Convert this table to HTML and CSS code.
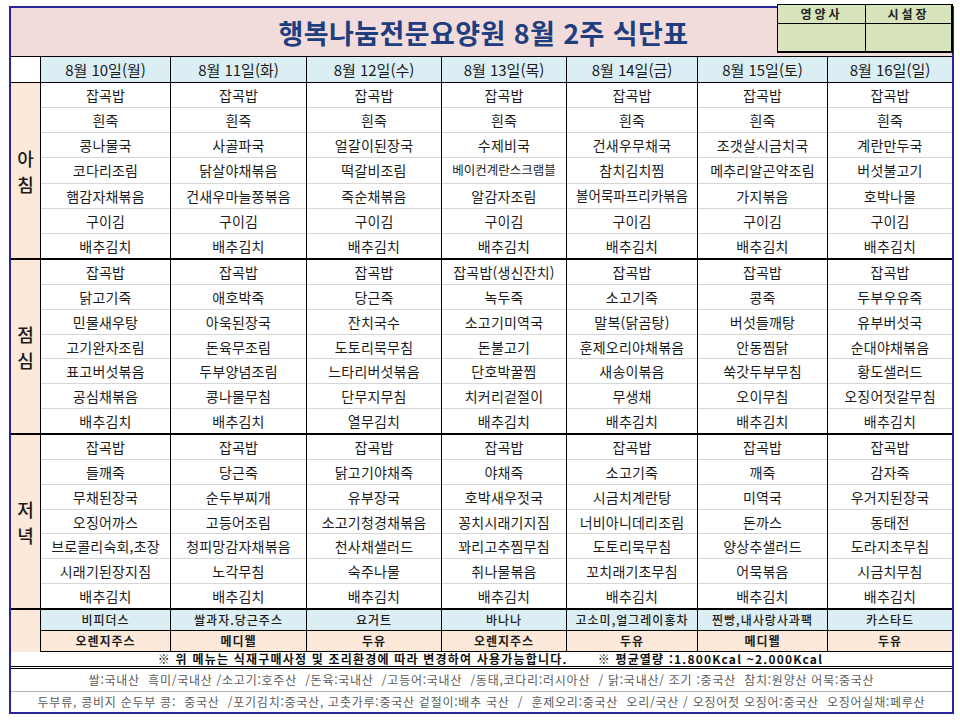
FILE: index.html
```html
<!DOCTYPE html>
<html lang="ko">
<head>
<meta charset="utf-8">
<title>행복나눔전문요양원 8월 2주 식단표</title>
<link rel="stylesheet" href="styles.css">
</head>
<body>
<div class="sheet">
  <header class="title-bar">
    <h1 class="title">행복나눔전문요양원 8월 2주 식단표</h1>
    <div class="sign">
      <div class="sign-head">영양사</div>
      <div class="sign-head sep">시설장</div>
      <div class="sign-body"></div>
      <div class="sign-body sep"></div>
    </div>
  </header>

  <div class="cols head">
    <div class="blank"></div>
    <div class="date">8월 10일(월)</div>
    <div class="date">8월 11일(화)</div>
    <div class="date">8월 12일(수)</div>
    <div class="date">8월 13일(목)</div>
    <div class="date">8월 14일(금)</div>
    <div class="date">8월 15일(토)</div>
    <div class="date">8월 16일(일)</div>
  </div>

  <section class="cols meal">
    <div class="label"><span>아</span><span>침</span></div>
    <div class="day"><div class="dish">잡곡밥</div><div class="dish">흰죽</div><div class="dish">콩나물국</div><div class="dish">코다리조림</div><div class="dish">햄감자채볶음</div><div class="dish">구이김</div><div class="dish">배추김치</div></div>
    <div class="day"><div class="dish">잡곡밥</div><div class="dish">흰죽</div><div class="dish">사골파국</div><div class="dish">닭살야채볶음</div><div class="dish">건새우마늘쫑볶음</div><div class="dish">구이김</div><div class="dish">배추김치</div></div>
    <div class="day"><div class="dish">잡곡밥</div><div class="dish">흰죽</div><div class="dish">얼갈이된장국</div><div class="dish">떡갈비조림</div><div class="dish">죽순채볶음</div><div class="dish">구이김</div><div class="dish">배추김치</div></div>
    <div class="day"><div class="dish">잡곡밥</div><div class="dish">흰죽</div><div class="dish">수제비국</div><div class="dish tight">베이컨계란스크램블</div><div class="dish">알감자조림</div><div class="dish">구이김</div><div class="dish">배추김치</div></div>
    <div class="day"><div class="dish">잡곡밥</div><div class="dish">흰죽</div><div class="dish">건새우무채국</div><div class="dish">참치김치찜</div><div class="dish snug">볼어묵파프리카볶음</div><div class="dish">구이김</div><div class="dish">배추김치</div></div>
    <div class="day"><div class="dish">잡곡밥</div><div class="dish">흰죽</div><div class="dish">조갯살시금치국</div><div class="dish">메추리알곤약조림</div><div class="dish">가지볶음</div><div class="dish">구이김</div><div class="dish">배추김치</div></div>
    <div class="day"><div class="dish">잡곡밥</div><div class="dish">흰죽</div><div class="dish">계란만두국</div><div class="dish">버섯불고기</div><div class="dish">호박나물</div><div class="dish">구이김</div><div class="dish">배추김치</div></div>
  </section>

  <section class="cols meal">
    <div class="label"><span>점</span><span>심</span></div>
    <div class="day"><div class="dish">잡곡밥</div><div class="dish">닭고기죽</div><div class="dish">민물새우탕</div><div class="dish">고기완자조림</div><div class="dish">표고버섯볶음</div><div class="dish">공심채볶음</div><div class="dish">배추김치</div></div>
    <div class="day"><div class="dish">잡곡밥</div><div class="dish">애호박죽</div><div class="dish">아욱된장국</div><div class="dish">돈육무조림</div><div class="dish">두부양념조림</div><div class="dish">콩나물무침</div><div class="dish">배추김치</div></div>
    <div class="day"><div class="dish">잡곡밥</div><div class="dish">당근죽</div><div class="dish">잔치국수</div><div class="dish">도토리묵무침</div><div class="dish">느타리버섯볶음</div><div class="dish">단무지무침</div><div class="dish">열무김치</div></div>
    <div class="day"><div class="dish">잡곡밥(생신잔치)</div><div class="dish">녹두죽</div><div class="dish">소고기미역국</div><div class="dish">돈불고기</div><div class="dish">단호박꿀찜</div><div class="dish">치커리겉절이</div><div class="dish">배추김치</div></div>
    <div class="day"><div class="dish">잡곡밥</div><div class="dish">소고기죽</div><div class="dish">말복(닭곰탕)</div><div class="dish">훈제오리야채볶음</div><div class="dish">새송이볶음</div><div class="dish">무생채</div><div class="dish">배추김치</div></div>
    <div class="day"><div class="dish">잡곡밥</div><div class="dish">콩죽</div><div class="dish">버섯들깨탕</div><div class="dish">안동찜닭</div><div class="dish">쑥갓두부무침</div><div class="dish">오이무침</div><div class="dish">배추김치</div></div>
    <div class="day"><div class="dish">잡곡밥</div><div class="dish">두부우유죽</div><div class="dish">유부버섯국</div><div class="dish">순대야채볶음</div><div class="dish">황도샐러드</div><div class="dish">오징어젓갈무침</div><div class="dish">배추김치</div></div>
  </section>

  <section class="cols meal">
    <div class="label"><span>저</span><span>녁</span></div>
    <div class="day"><div class="dish">잡곡밥</div><div class="dish">들깨죽</div><div class="dish">무채된장국</div><div class="dish">오징어까스</div><div class="dish">브로콜리숙회,초장</div><div class="dish">시래기된장지짐</div><div class="dish">배추김치</div></div>
    <div class="day"><div class="dish">잡곡밥</div><div class="dish">당근죽</div><div class="dish">순두부찌개</div><div class="dish">고등어조림</div><div class="dish">청피망감자채볶음</div><div class="dish">노각무침</div><div class="dish">배추김치</div></div>
    <div class="day"><div class="dish">잡곡밥</div><div class="dish">닭고기야채죽</div><div class="dish">유부장국</div><div class="dish">소고기청경채볶음</div><div class="dish">천사채샐러드</div><div class="dish">숙주나물</div><div class="dish">배추김치</div></div>
    <div class="day"><div class="dish">잡곡밥</div><div class="dish">야채죽</div><div class="dish">호박새우젓국</div><div class="dish">꽁치시래기지짐</div><div class="dish">꽈리고추찜무침</div><div class="dish">취나물볶음</div><div class="dish">배추김치</div></div>
    <div class="day"><div class="dish">잡곡밥</div><div class="dish">소고기죽</div><div class="dish">시금치계란탕</div><div class="dish">너비아니데리조림</div><div class="dish">도토리묵무침</div><div class="dish">꼬치래기초무침</div><div class="dish">배추김치</div></div>
    <div class="day"><div class="dish">잡곡밥</div><div class="dish">깨죽</div><div class="dish">미역국</div><div class="dish">돈까스</div><div class="dish">양상추샐러드</div><div class="dish">어묵볶음</div><div class="dish">배추김치</div></div>
    <div class="day"><div class="dish">잡곡밥</div><div class="dish">감자죽</div><div class="dish">우거지된장국</div><div class="dish">동태전</div><div class="dish">도라지초무침</div><div class="dish">시금치무침</div><div class="dish">배추김치</div></div>
  </section>

  <section class="cols snack">
    <div class="label"></div>
    <div class="day"><div class="snack-a">비피더스</div><div class="snack-b">오렌지주스</div></div>
    <div class="day"><div class="snack-a">쌀과자.당근주스</div><div class="snack-b">메디웰</div></div>
    <div class="day"><div class="snack-a">요거트</div><div class="snack-b">두유</div></div>
    <div class="day"><div class="snack-a">바나나</div><div class="snack-b">오렌지주스</div></div>
    <div class="day"><div class="snack-a">고소미,얼그레이홍차</div><div class="snack-b">두유</div></div>
    <div class="day"><div class="snack-a">찐빵,내사랑사과팩</div><div class="snack-b">메디웰</div></div>
    <div class="day"><div class="snack-a">카스타드</div><div class="snack-b">두유</div></div>
  </section>

  <p class="note"><span>※ 위 메뉴는 식재구매사정 및 조리환경에 따라 변경하여 사용가능합니다.</span><span class="kcal">※ 평균열량 :1.800Kcal ~2.000Kcal</span></p>
  <p class="origin first">쌀:국내산  흑미/국내산 /소고기:호주산  /돈육:국내산  /고등어:국내산  /동태,코다리:러시아산  / 닭:국내산/ 조기 :중국산  참치:원양산 어묵:중국산</p>
  <p class="origin">두부류, 콩비지 순두부 콩:  중국산  /포기김치:중국산, 고춧가루:중국산 겉절이:배추 국산  /  훈제오리:중국산  오리/국산 / 오징어젓 오징어:중국산  오징어실채:페루산</p>
</div>
</body>
</html>
```

FILE: styles.css
```css
* { box-sizing: border-box; }

html, body {
  margin: 0;
  padding: 0;
  background: #ffffff;
}

body {
  font-family: "Noto Sans CJK KR", "Noto Sans", sans-serif;
  color: #1c1c1c;
}

.sheet {
  position: relative;
  width: 945px;
  height: 708px;
  margin: 6px 0 0 9px;
  border: 2px solid #27279a;
}

/* ---------- title ---------- */
.title-bar {
  height: 49px;
  background: #f2dcdb;
  border-bottom: 1px solid #000;
  display: flex;
  align-items: center;
  justify-content: center;
}

.title {
  margin: 0 0 0 4px;
  font-size: 27px;
  font-weight: 700;
  line-height: 1;
  letter-spacing: 0.4px;
  color: #203e7e;
}

.sign {
  position: absolute;
  top: -4px;
  right: -1px;
  width: 176px;
  height: 49px;
  display: grid;
  grid-template-columns: 87px 1fr;
  grid-template-rows: 19px 1fr;
  background: #d7e4bc;
  border: 1px solid #000;
  border-right-width: 2px;
  border-bottom-width: 2px;
}

.sign-head {
  border-bottom: 1px solid #000;
  display: flex;
  align-items: center;
  justify-content: center;
  font-size: 12px;
  font-weight: 700;
  letter-spacing: 3px;
  line-height: 1;
  color: #222;
}

.sep { border-left: 1px solid #000; }

/* ---------- grid ---------- */
.cols {
  display: grid;
  grid-template-columns: 29px 130px 136px 135px 125px 131px 130px 125px;
}

.head {
  height: 26px;
  border-bottom: 1px solid #000;
}

.date {
  background: #dbeef4;
  border-left: 1px solid #000;
  display: flex;
  align-items: center;
  justify-content: center;
  font-size: 15px;
  line-height: 1;
  color: #1a1a1a;
  white-space: nowrap;
}

.label {
  background: #fde9d9;
  display: flex;
  flex-direction: column;
  align-items: center;
  justify-content: center;
  font-size: 18px;
  font-weight: 500;
  line-height: 26px;
  color: #1a1a1a;
}

.meal { height: 175px; }
.meal + .meal { border-top: 2px solid #000; }

.day {
  display: flex;
  flex-direction: column;
  border-left: 1px solid #000;
  min-width: 0;
}

.dish {
  flex: 1;
  display: flex;
  align-items: center;
  justify-content: center;
  font-size: 14px;
  line-height: 1;
  letter-spacing: 0.2px;
  white-space: nowrap;
}

.dish + .dish { border-top: 1px solid #d6d6d6; }

.dish.tight { font-size: 12.5px; letter-spacing: 0; }
.dish.snug { font-size: 13.5px; letter-spacing: 0; }

/* ---------- snacks ---------- */
.snack {
  height: 44px;
  border-top: 2px solid #000;
}

.snack .day { border-bottom: 1px solid #000; }

.snack-a,
.snack-b {
  display: flex;
  align-items: center;
  justify-content: center;
  font-size: 12px;
  line-height: 1;
  letter-spacing: 1px;
  white-space: nowrap;
}

.snack-a {
  height: 20px;
  background: #dbeef4;
  font-weight: 500;
}

.snack-b {
  height: 21px;
  background: #fde9d9;
  border-top: 1px solid #000;
  font-weight: 700;
}

/* ---------- footer ---------- */
.note {
  margin: 0;
  height: 17px;
  padding-left: 18px;
  border-bottom: 3px double #000;
  display: flex;
  align-items: center;
  justify-content: center;
  font-size: 12px;
  font-weight: 700;
  line-height: 14px;
  letter-spacing: 1.2px;
  color: #111;
  white-space: nowrap;
}

.kcal { margin-left: 30px; }

.origin {
  margin: 0;
  height: 20px;
  display: flex;
  align-items: center;
  justify-content: center;
  font-size: 12px;
  line-height: 1;
  letter-spacing: 0.75px;
  color: #5c5c5c;
  white-space: pre;
}

.origin.first {
  height: 23px;
  border-bottom: 1px solid #b4b4b4;
}
```
